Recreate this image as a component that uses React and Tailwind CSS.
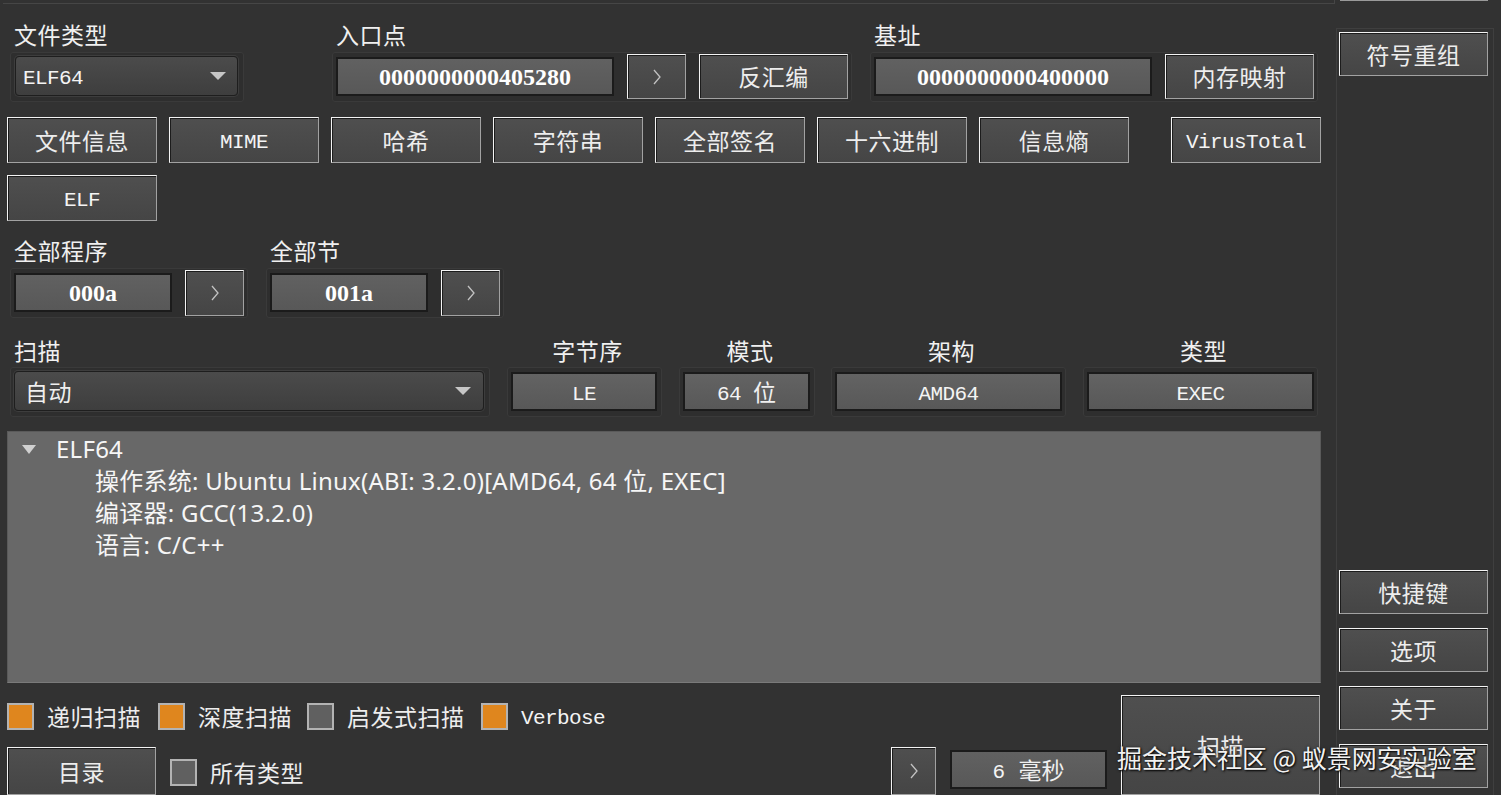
import React from 'react'

const CJK = "font-['Noto_Sans_CJK_SC',sans-serif]"
const MONO = "font-['Liberation_Mono','Noto_Sans_CJK_SC',monospace]"
const HEX = "font-['Liberation_Serif',serif] font-bold text-[24px] text-white"
const TREE = "font-['Noto_Sans','Noto_Sans_CJK_SC',sans-serif]"

function Chevron() {
  return (
    <svg width="10" height="18" viewBox="0 0 10 18" fill="none">
      <path d="M2 2 L8 9 L2 16" stroke="#c2c2c2" strokeWidth="1.3" />
    </svg>
  )
}

function Arrow() {
  return (
    <svg width="16" height="8" viewBox="0 0 16 8">
      <path d="M0 0 H16 L8 8 Z" fill="#c6c6c6" />
    </svg>
  )
}

function Btn({ className = '', children }) {
  return (
    <div
      className={`flex items-center justify-center shrink-0 bg-linear-to-b from-[#4f4f4f] to-[#454545] border border-t-[#f4f4f4] border-l-[#f4f4f4] border-r-[#a2a2a2] border-b-[#a2a2a2] shadow-[inset_1px_1px_0_#1c1c1c] text-[#ededed] ${className}`}
    >
      {children}
    </div>
  )
}

function Frame({ className = '', children }) {
  return (
    <div className={`flex items-start shrink-0 rounded-[3px] bg-[#2e2e2e] border border-[#3a3a3a] ${className}`}>
      {children}
    </div>
  )
}

function Field({ className = '', children }) {
  return (
    <div
      className={`flex items-center justify-center shrink-0 bg-linear-to-b from-[#616161] to-[#585858] border-2 border-[#1b1b1b] ${className}`}
    >
      {children}
    </div>
  )
}

function Combo({ className = '', children }) {
  return (
    <div
      className={`flex items-center justify-between shrink-0 rounded-[4px] border border-[#1e1e1e] bg-linear-to-b from-[#4b4b4b] to-[#3e3e3e] shadow-[0_0_0_1px_#3d3d3d] ${className}`}
    >
      {children}
      <Arrow />
    </div>
  )
}

function Check({ on }) {
  return (
    <div
      className={`w-[27px] h-[27px] shrink-0 border-2 border-[#b3b3b3] ${on ? 'bg-[#df861e]' : 'bg-[#606060]'}`}
    />
  )
}

function Label({ className = '', children }) {
  return (
    <div className={`h-[28px] leading-[28px] text-[23px] tracking-[0.5px] text-[#f0f0f0] ${CJK} ${className}`}>
      {children}
    </div>
  )
}

const bt = `text-[23px] tracking-[0.5px] ${CJK}`
// SimSun-like latin: monospaced, nudged down a little to sit like the original
const mt = `text-[21px] tracking-[-0.6px] pt-[6px] text-[#f4f4f4] ${MONO}`

const TOOLS = [
  { t: '文件信息', c: bt },
  { t: 'MIME', c: mt },
  { t: '哈希', c: bt },
  { t: '字符串', c: bt },
  { t: '全部签名', c: bt },
  { t: '十六进制', c: bt },
  { t: '信息熵', c: bt },
]

export default function App() {
  return (
    <div className="relative w-[1501px] h-[795px] overflow-hidden bg-[#323232] flex">
      {/* left side */}
      <div className="w-[1336px] shrink-0 flex flex-col">
        <div className="h-[6px] ml-[3px] w-[1332px] border-b border-r border-[#464646]" />

        {/* entry / base */}
        <div className="flex mt-[16px]">
          <div className="ml-[10px] flex flex-col">
            <Label className="pl-[4px]">文件类型</Label>
            <Frame className="mt-[4px] w-[234px] h-[50px]">
              <Combo className="ml-[4px] mt-[3px] w-[223px] h-[40px] pl-[7px] pr-[11px]">
                <span className={mt}>ELF64</span>
              </Combo>
            </Frame>
          </div>
          <div className="ml-[88px] flex flex-col">
            <Label className="pl-[4px]">入口点</Label>
            <Frame className="mt-[4px] w-[520px] h-[50px]">
              <Field className="ml-[3px] mt-[4px] w-[278px] h-[39px]">
                <span className={HEX}>0000000000405280</span>
              </Field>
              <Btn className="ml-[13px] mt-[1px] w-[59px] h-[45px]">
                <Chevron />
              </Btn>
              <Btn className={`ml-[13px] mt-[1px] w-[149px] h-[45px] ${bt}`}>反汇编</Btn>
            </Frame>
          </div>
          <div className="ml-[18px] flex flex-col">
            <Label className="pl-[4px]">基址</Label>
            <Frame className="mt-[4px] w-[448px] h-[50px]">
              <Field className="ml-[3px] mt-[4px] w-[278px] h-[39px]">
                <span className={HEX}>0000000000400000</span>
              </Field>
              <Btn className={`ml-[13px] mt-[1px] w-[149px] h-[45px] ${bt}`}>内存映射</Btn>
            </Frame>
          </div>
        </div>

        {/* tool buttons */}
        <div className="flex mt-[15px] ml-[7px] gap-[12px]">
          {TOOLS.map(b => (
            <Btn key={b.t} className={`w-[150px] h-[46px] ${b.c}`}>{b.t}</Btn>
          ))}
          <Btn className={`ml-[30px] w-[150px] h-[46px] ${mt}`}>VirusTotal</Btn>
        </div>
        <div className="flex mt-[12px] ml-[7px]">
          <Btn className={`w-[150px] h-[46px] ${mt}`}>ELF</Btn>
        </div>

        {/* programs / sections */}
        <div className="flex mt-[15px]">
          <div className="ml-[10px] flex flex-col">
            <Label className="pl-[4px]">全部程序</Label>
            <Frame className="mt-[4px] w-[238px] h-[50px]">
              <Field className="ml-[3px] mt-[4px] w-[158px] h-[39px]">
                <span className={HEX}>000a</span>
              </Field>
              <Btn className="ml-[13px] mt-[1px] w-[59px] h-[46px]">
                <Chevron />
              </Btn>
            </Frame>
          </div>
          <div className="ml-[18px] flex flex-col">
            <Label className="pl-[4px]">全部节</Label>
            <Frame className="mt-[4px] w-[238px] h-[50px]">
              <Field className="ml-[3px] mt-[4px] w-[158px] h-[39px]">
                <span className={HEX}>001a</span>
              </Field>
              <Btn className="ml-[13px] mt-[1px] w-[59px] h-[46px]">
                <Chevron />
              </Btn>
            </Frame>
          </div>
        </div>

        {/* scan mode + info */}
        <div className="flex mt-[18px]">
          <div className="ml-[10px] flex flex-col">
            <Label className="pl-[4px]">扫描</Label>
            <Frame className="mt-[3px] w-[480px] h-[50px]">
              <Combo className="ml-[3px] mt-[3px] w-[470px] h-[40px] pl-[10px] pr-[12px]">
                <span className={`text-[23px] tracking-[0.5px] text-[#eeeeee] ${CJK}`}>自动</span>
              </Combo>
            </Frame>
          </div>
          {[
            { l: '字节序', ml: 'ml-[17px]', w: 'w-[155px]', fw: 'w-[146px]', v: <span className={mt}>LE</span> },
            {
              l: '模式', ml: 'ml-[17px]', w: 'w-[136px]', fw: 'w-[127px]',
              v: (
                <span className="flex items-center">
                  <span className={mt}>64</span>
                  <span className={`ml-[12px] text-[23px] ${CJK}`}>位</span>
                </span>
              ),
            },
            { l: '架构', ml: 'ml-[16px]', w: 'w-[235px]', fw: 'w-[227px]', v: <span className={mt}>AMD64</span> },
            { l: '类型', ml: 'ml-[17px]', w: 'w-[235px]', fw: 'w-[227px]', v: <span className={mt}>EXEC</span> },
          ].map(g => (
            <div key={g.l} className={`${g.ml} flex flex-col`}>
              <Label className="text-center pl-[6px]">{g.l}</Label>
              <Frame className={`mt-[3px] ${g.w} h-[50px]`}>
                <Field className={`ml-[3px] mt-[4px] ${g.fw} h-[39px] from-[#636363] to-[#5d5d5d] text-[#f0f0f0]`}>
                  {g.v}
                </Field>
              </Frame>
            </div>
          ))}
        </div>

        {/* result tree */}
        <div
          className={`mt-[14px] ml-[7px] w-[1314px] h-[252px] shrink-0 bg-[#686868] border border-[#5a5a5a] border-b-[#7a7a7a] pt-[1px] text-[24px] tracking-[0.25px] leading-[32px] text-[#f6f6f6] ${TREE}`}
        >
          <div className="flex items-center">
            <svg className="ml-[14px]" width="14" height="9" viewBox="0 0 14 9">
              <path d="M0 0 H14 L7 9 Z" fill="#d0d0d0" />
            </svg>
            <span className="ml-[20px]">ELF64</span>
          </div>
          <div className="pl-[87px]">操作系统: Ubuntu Linux(ABI: 3.2.0)[AMD64, 64 位, EXEC]</div>
          <div className="pl-[87px]">编译器: GCC(13.2.0)</div>
          <div className="pl-[87px]">语言: C/C++</div>
        </div>

        {/* bottom */}
        <div className="flex mt-[12px]">
          <div className="w-[1107px] shrink-0 flex flex-col">
            <div className="flex items-center mt-[7px] h-[28px] ml-[7px]">
              {[
                { on: true, l: '递归扫描', w: 'w-[151px]', c: bt },
                { on: true, l: '深度扫描', w: 'w-[149px]', c: bt },
                { on: false, l: '启发式扫描', w: 'w-[174px]', c: bt },
                { on: true, l: 'Verbose', w: 'w-[140px]', c: mt },
              ].map(c => (
                <div key={c.l} className={`${c.w} flex items-center shrink-0`}>
                  <Check on={c.on} />
                  <span className={`ml-[13px] text-[#ededed] ${c.c}`}>{c.l}</span>
                </div>
              ))}
            </div>
            <div className="flex items-start mt-[17px] ml-[7px]">
              <Btn className={`w-[149px] h-[48px] ${bt}`}>目录</Btn>
              <div className="ml-[14px] mt-[8px] flex items-center">
                <Check on={false} />
                <span className={`ml-[13px] text-[#ededed] ${bt}`}>所有类型</span>
              </div>
              <Btn className="ml-auto w-[45px] h-[48px]">
                <Chevron />
              </Btn>
              <Field className="ml-[14px] mt-[3px] w-[157px] h-[39px] text-[#f0f0f0]">
                <span className={mt}>6</span>
                <span className={`ml-[14px] text-[23px] ${CJK}`}>毫秒</span>
              </Field>
            </div>
          </div>
          <Btn className={`ml-[14px] w-[199px] h-[100px] ${bt}`}>扫描</Btn>
        </div>
      </div>

      {/* right side */}
      <div className="w-[158px] shrink-0 flex flex-col">
        <div className="h-[1px] ml-[4px] w-[148px] bg-[#9a9a9a]" />
        <div className="mt-[27px] flex-1 border border-[#3f3f3f] border-b-0 flex flex-col pt-[3px] pl-[2px]">
          <Btn className={`w-[149px] h-[44px] ${bt}`}>符号重组</Btn>
          <Btn className={`mt-[494px] w-[149px] h-[44px] ${bt}`}>快捷键</Btn>
          <Btn className={`mt-[14px] w-[149px] h-[44px] ${bt}`}>选项</Btn>
          <Btn className={`mt-[14px] w-[149px] h-[44px] ${bt}`}>关于</Btn>
          <Btn className={`mt-[14px] w-[149px] h-[44px] ${bt}`}>退出</Btn>
        </div>
      </div>

      {/* watermark */}
      <div
        className={`absolute left-[1117px] top-[740px] text-[25px] leading-[34px] text-[#f2f2f2] [text-shadow:1px_1px_2px_#000,0_0_3px_#222] ${CJK}`}
      >
        掘金技术社区 @ 蚁景网安实验室
      </div>
    </div>
  )
}
